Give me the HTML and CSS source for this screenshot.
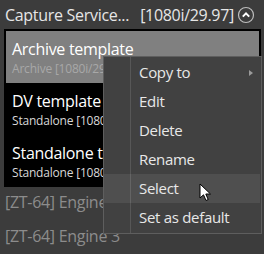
FILE: index.html
```html
<!DOCTYPE html>
<html lang="en">
<head>
    <meta charset="UTF-8">
    <title>Capture Service</title>
    <link rel="stylesheet" href="styles.css">
</head>
<body>
    <div class="header">
        <span class="title">Capture Service...</span>
        <span class="format">[1080i/29.97]</span>
        <svg class="collapse" width="18" height="18" viewBox="0 0 18 18">
            <circle cx="9" cy="9" r="7.5" fill="none" stroke="#bdbdbd" stroke-width="1.2"/>
            <path d="M5.8 10.6 L9 7.4 L12.2 10.6" fill="none" stroke="#ffffff" stroke-width="2"/>
        </svg>
    </div>

    <div class="templates">
        <div class="template selected">
            <div class="name">Archive template</div>
            <div class="info">Archive [1080i/29.97]</div>
        </div>
        <div class="template">
            <div class="name">DV template</div>
            <div class="info">Standalone [1080i/29.97]</div>
        </div>
        <div class="template">
            <div class="name">Standalone template</div>
            <div class="info">Standalone [1080i/29.97]</div>
        </div>
    </div>

    <div class="engine">[ZT-64] Engine 2</div>
    <div class="engine">[ZT-64] Engine 3</div>

    <!-- context menu -->
    <div class="menu">
        <div class="menu-item">Copy to <span class="sub-arrow"></span></div>
        <div class="menu-item">Edit</div>
        <div class="menu-item">Delete</div>
        <div class="menu-item">Rename</div>
        <div class="menu-item hover">Select</div>
        <div class="menu-item">Set as default</div>
    </div>

    <svg class="cursor" width="14" height="20" viewBox="0 0 14 20">
        <path d="M1 1 L1 15 L4.5 11.8 L7 17.5 L9.2 16.5 L6.8 11 L11.5 11 Z" fill="#ffffff" stroke="#000000" stroke-width="1"/>
    </svg>
</body>
</html>
```

FILE: styles.css
```css
body {
    font-family: 'Open Sans', 'Noto Sans', sans-serif;
    background-color: #3c3c3c;
    margin: 0;
    width: 264px;
    height: 254px;
    overflow: hidden;
    position: relative;
}

.header {
    display: flex;
    align-items: center;
    height: 29px;
    padding: 0 9px 0 5px;
    color: #e6e6e6;
    font-size: 16px;
}

.title {
    flex: 1;
    letter-spacing: -0.3px;
}

.format {
    margin-right: 3px;
    letter-spacing: -0.3px;
}

.templates {
    background: #000;
    margin: 0 3px 0 4px;
    padding: 2px 2px 0 2px;
}

.template {
    height: 52px;
    padding: 7px 0 0 6px;
    box-sizing: border-box;
    white-space: nowrap;
    overflow: hidden;
}

.template.selected {
    background: #808080;
}

.name {
    color: #ffffff;
    font-size: 16px;
    line-height: 22px;
    letter-spacing: -0.3px;
}

.info {
    color: #d8d8d8;
    font-size: 12px;
    line-height: 18px;
    letter-spacing: -0.2px;
}

.selected .info {
    color: #a8a8a8;
}

.engine {
    color: #8c8c8c;
    font-size: 16px;
    height: 34px;
    line-height: 30px;
    padding-left: 5px;
    letter-spacing: -0.3px;
}

.menu {
    position: absolute;
    left: 103px;
    top: 56px;
    width: 157px;
    padding: 1px 0;
    background: #414141;
    border: 1px solid #5e5e5e;
    background-image: linear-gradient(to right, transparent 26px, #575757 26px, #575757 27px, transparent 27px);
}

.menu-item {
    position: relative;
    height: 29px;
    line-height: 29px;
    padding-left: 35px;
    color: #e8e8e8;
    font-size: 15px;
    letter-spacing: -0.3px;
}

.menu-item.hover {
    background: rgba(255, 255, 255, 0.08);
    margin-right: 1px;
}

.sub-arrow {
    position: absolute;
    right: 8px;
    top: 12px;
    border-left: 4px solid #9a9a9a;
    border-top: 3px solid transparent;
    border-bottom: 3px solid transparent;
}

.cursor {
    position: absolute;
    left: 199px;
    top: 183px;
}
```
